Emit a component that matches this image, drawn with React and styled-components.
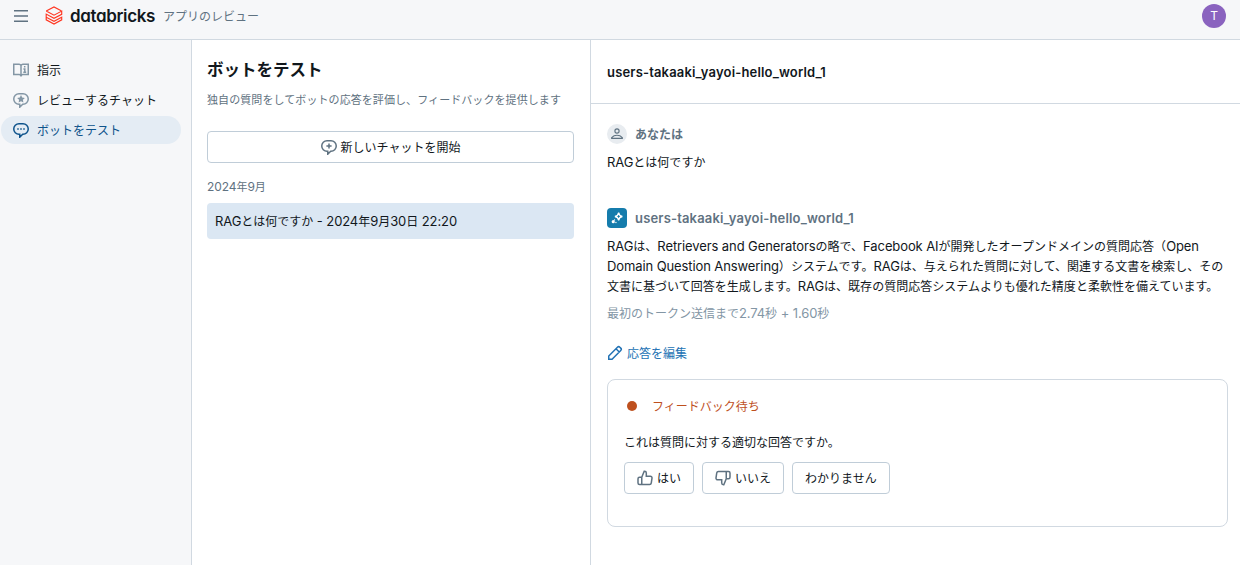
import React from 'react';
import styled, { createGlobalStyle } from 'styled-components';

const GlobalStyle = createGlobalStyle`
  *, *::before, *::after { box-sizing: border-box; }
  body {
    margin: 0;
    background: #fff;
    color: #11171c;
    font-family: "Inter", "Noto Sans CJK JP", sans-serif;
    font-size: 12px;
    line-height: 20px;
  }
  button { font: inherit; color: inherit; }
`;

const Page = styled.div`
  display: flex;
  flex-direction: column;
  height: 565px;
  overflow: hidden;
`;

const TopBar = styled.header`
  display: flex;
  align-items: center;
  height: 40px;
  padding: 0 14px 8px 13px;
  background: #f6f7f9;
  border-bottom: 1px solid #d1d9e1;
  color: #5f7281;
`;

const Brand = styled.span`
  width: 86px;
  margin-left: 7px;
  color: #11171c;
  font-size: 17px;
  font-weight: 600;
  letter-spacing: -0.35px;
  font-feature-settings: "cv11";
`;

const AppName = styled.span`
  flex: 1;
  margin-left: 7px;
  padding-top: 2px;
`;

const Avatar = styled.div`
  display: flex;
  align-items: center;
  justify-content: center;
  width: 24px;
  height: 24px;
  border-radius: 50%;
  background: #8a63bf;
  color: #fff;
`;

const Columns = styled.div`
  display: flex;
  flex: 1;
  min-height: 0;
`;

const Sidebar = styled.nav`
  display: flex;
  flex-direction: column;
  gap: 2px;
  width: 192px;
  padding: 16px 10px 0 1px;
  background: #f6f7f9;
  border-right: 1px solid #d1d9e1;
`;

const NavItem = styled.a`
  display: flex;
  align-items: center;
  gap: 8px;
  height: 28px;
  padding: 0 12px;
  border-radius: 14px;
  background: ${(p) => (p.$active ? '#e4ecf4' : 'transparent')};
  color: ${(p) => (p.$active ? '#0e538b' : '#11171c')};
  svg { color: ${(p) => (p.$active ? '#0e538b' : '#8396a5')}; }
`;

// Glyphs sit high in their line box; this centres them beside icons.
const Label = styled.span`
  padding-top: 2px;
`;

const ChatList = styled.section`
  display: flex;
  flex-direction: column;
  width: 399px;
  padding: 16px 16px 0 15px;
  border-right: 1px solid #d1d9e1;
`;

const Title = styled.h1`
  margin: 0;
  font-size: 16.5px;
  font-weight: 600;
  line-height: 28px;
`;

const Subtitle = styled.p`
  margin: 6px 0 21px;
  font-size: 11px;
  letter-spacing: 0.08px;
  color: #5f7281;
`;

const Button = styled.button`
  display: inline-flex;
  align-items: center;
  justify-content: center;
  gap: 4px;
  height: 32px;
  padding: 0 12px;
  border: 1px solid #c0cdd8;
  border-radius: 4px;
  background: #fff;
  svg { color: #5f7281; }
`;

const MonthLabel = styled.div`
  margin: 14px 0 6px;
  font-size: 11px;
  color: #5f7281;
`;

const ChatEntry = styled.div`
  display: flex;
  align-items: center;
  height: 36px;
  padding: 0 8px;
  border-radius: 4px;
  background: #dbe7f3;
`;

const Conversation = styled.main`
  display: flex;
  flex: 1;
  flex-direction: column;
  min-width: 0;
`;

const ConversationHeader = styled.div`
  display: flex;
  align-items: center;
  height: 64px;
  padding: 1px 16px 0;
  border-bottom: 1px solid #d1d9e1;
  font-weight: 600;
`;

const Messages = styled.div`
  display: flex;
  flex-direction: column;
  align-items: flex-start;
  padding: 20px 12px 0 16px;
`;

const Author = styled.div`
  display: flex;
  align-items: center;
  gap: 8px;
  height: 20px;
  margin-top: ${(p) => p.$top || 0}px;
  color: #5f7281;
  font-weight: 600;
`;

const AuthorBadge = styled.span`
  display: flex;
  align-items: center;
  justify-content: center;
  width: 20px;
  height: 20px;
  border-radius: ${(p) => (p.$bot ? '4px' : '50%')};
  background: ${(p) => (p.$bot ? '#157cac' : '#e8ecf0')};
  color: ${(p) => (p.$bot ? '#fff' : '#5f7281')};
`;

const MessageText = styled.p`
  margin: 9px 0 0;
  letter-spacing: 0.02px;
  white-space: nowrap;
`;

const Timing = styled.div`
  margin-top: 7px;
  color: #8396a5;
`;

const EditLink = styled.a`
  display: flex;
  align-items: center;
  gap: 4px;
  height: 20px;
  margin-top: 19px;
  color: #2272b4;
`;

const FeedbackCard = styled.section`
  align-self: stretch;
  height: 148px;
  margin-top: 16px;
  padding: 16px;
  border: 1px solid #d1d9e1;
  border-radius: 8px;
`;

const Status = styled.div`
  display: flex;
  align-items: center;
  gap: 15px;
  height: 20px;
  padding-left: 3px;
  color: #be501e;
`;

const StatusDot = styled.span`
  width: 10px;
  height: 10px;
  border-radius: 50%;
  background: currentColor;
`;

const Question = styled.p`
  margin: 17px 0 9px;
`;

const Answers = styled.div`
  display: flex;
  gap: 8px;
`;

const LatinRun = styled.span`
  font-size: ${(p) => p.$size}px;
  letter-spacing: ${(p) => p.$spacing}px;
  line-height: 0;
`;

// Latin runs are set one pixel larger than the Japanese text around them.
function Mixed({ children, size = 13, spacing = -0.1 }) {
  return children.split(/([\x20-\x7e]+)/).map((part, i) =>
    i % 2 ? (
      <LatinRun key={i} $size={size} $spacing={spacing}>{part}</LatinRun>
    ) : (
      part
    )
  );
}

function Icon({ size = 16, children }) {
  return (
    <svg width={size} height={size} viewBox="0 0 16 16" fill="none" stroke="currentColor" strokeWidth="1.5">
      {children}
    </svg>
  );
}

const bubble = 'M6 1.75h4a5.25 5.25 0 0 1 0 10.5h-.3L6.75 15.2v-2.95H6a5.25 5.25 0 0 1 0-10.5z';

const MenuIcon = () => (
  <Icon><path d="M1 2.75h14M1 8h14M1 13.25h14" /></Icon>
);

const LogoSvg = styled.svg`
  margin-left: 16px;
`;

const LogoMark = () => (
  <LogoSvg width="18" height="19" viewBox="0 0 18 19" fill="none" stroke="#ff3621" strokeWidth="1.15">
    <path d="M1.2 4.9 9 1l7.2 3.7M1.2 4.9 9 9.2l7.7-4.1v3.2L9 12.3 1.2 8.1v3.1L9 15.3l7.7-4.1v2.6L9 18l-7.8-4.2v-2.6" />
  </LogoSvg>
);

const GuideIcon = () => (
  <Icon>
    <path d="M8 3.3C7.6 2.5 7 2.15 6.1 2.15H.75v10.3H6c1.2 0 2 .7 2 2.05 0-1.35.8-2.05 2-2.05h5.25V2.15H9.9C9 2.15 8.4 2.5 8 3.3zV14" />
    <path d="M11.7 3.9v1.6M10.4 7.1h1.4v3.2M10.3 10.2h2.9" />
  </Icon>
);

const StarBubbleIcon = () => (
  <Icon>
    <path d={bubble} />
    <path d="M8 3.1l1.2 2.5 2.7.3-2 1.9.5 2.7L8 9.2l-2.4 1.3.5-2.7-2-1.9 2.7-.3z" fill="currentColor" stroke="none" />
  </Icon>
);

const DotsBubbleIcon = () => (
  <Icon>
    <path d={bubble} />
    <path d="M4.25 7h1.5M7.25 7h1.5M10.25 7h1.5" />
  </Icon>
);

const PlusBubbleIcon = () => (
  <Icon>
    <path d={bubble} />
    <path d="M8 4.4v5.2M5.4 7h5.2" />
  </Icon>
);

const UserIcon = () => (
  <Icon size={12}>
    <circle cx="8" cy="4" r="2.8" />
    <path d="M.9 13.9v-1.2C2.7 10.8 5.2 9.7 8 9.7s5.3 1.1 7.1 3v1.2z" />
  </Icon>
);

const SparkleIcon = () => (
  <Icon size={12}>
    <path d="M10.2.9c.5 3.6 1.500 4.600 5 5.100-3.500.5-4.500 1.500-5 5.100-.5-3.600-1.500-4.600-5-5.100 3.500-.5 4.500-1.500 5-5.100z" strokeWidth="1.700" />
    <circle cx="3" cy="12.900" r="2.100" fill="currentColor" stroke="none" />
    <circle cx="6.600" cy="14" r=".9" fill="currentColor" stroke="none" />
    <circle cx="4.700" cy="10.500" r=".9" fill="currentColor" stroke="none" />
  </Icon>
);

const PencilIcon = () => (
  <Icon>
    <path d="M1.75 14.25v-3.3l8.7-8.7a1.7 1.7 0 0 1 2.4 0l.9.9a1.7 1.7 0 0 1 0 2.4l-8.7 8.7zM9 3.75 12.25 7" />
  </Icon>
);

const thumb = 'M4.75 7.2 7.2 1.25h.4a1.7 1.7 0 0 1 1.7 1.7v3.3h4a1.7 1.7 0 0 1 1.7 1.95l-.75 4.85a1.7 1.7 0 0 1-1.7 1.45h-7.8zM4.75 7.2H2.5A1.5 1.5 0 0 0 1 8.7v4.3a1.5 1.5 0 0 0 1.5 1.5h2.25z';

const ThumbUpIcon = () => (
  <Icon><path d={thumb} /></Icon>
);

const ThumbDownIcon = () => (
  <Icon><path d={thumb} transform="rotate(180 8 8)" /></Icon>
);

const MODEL_NAME = 'users-takaaki_yayoi-hello_world_1';

export default function App() {
  return (
    <>
      <GlobalStyle />
      <Page>
        <TopBar>
          <MenuIcon />
          <LogoMark />
          <Brand>databricks</Brand>
          <AppName>アプリのレビュー</AppName>
          <Avatar>T</Avatar>
        </TopBar>
        <Columns>
          <Sidebar>
            <NavItem><GuideIcon /><Label>指示</Label></NavItem>
            <NavItem><StarBubbleIcon /><Label>レビューするチャット</Label></NavItem>
            <NavItem $active><DotsBubbleIcon /><Label>ボットをテスト</Label></NavItem>
          </Sidebar>
          <ChatList>
            <Title>ボットをテスト</Title>
            <Subtitle>独自の質問をしてボットの応答を評価し、フィードバックを提供します</Subtitle>
            <Button><PlusBubbleIcon /><Label>新しいチャットを開始</Label></Button>
            <MonthLabel><Mixed size={12}>2024年9月</Mixed></MonthLabel>
            <ChatEntry><Label><Mixed>RAGとは何ですか - 2024年9月30日 22:20</Mixed></Label></ChatEntry>
          </ChatList>
          <Conversation>
            <ConversationHeader><Label><Mixed spacing={0.17}>{MODEL_NAME}</Mixed></Label></ConversationHeader>
            <Messages>
              <Author><AuthorBadge><UserIcon /></AuthorBadge><Label>あなたは</Label></Author>
              <MessageText><Mixed>RAGとは何ですか</Mixed></MessageText>
              <Author $top={35}>
                <AuthorBadge $bot><SparkleIcon /></AuthorBadge>
                <Label><Mixed spacing={0.17}>{MODEL_NAME}</Mixed></Label>
              </Author>
              <MessageText>
                <Mixed>RAGは、Retrievers and Generatorsの略で、Facebook AIが開発したオープンドメインの質問応答（Open</Mixed>
                <br />
                <Mixed>Domain Question Answering）システムです。RAGは、与えられた質問に対して、関連する文書を検索し、その</Mixed>
                <br />
                <Mixed>文書に基づいて回答を生成します。RAGは、既存の質問応答システムよりも優れた精度と柔軟性を備えています。</Mixed>
              </MessageText>
              <Timing><Mixed>最初のトークン送信まで2.74秒 + 1.60秒</Mixed></Timing>
              <EditLink><PencilIcon /><Label>応答を編集</Label></EditLink>
              <FeedbackCard>
                <Status><StatusDot /><Label>フィードバック待ち</Label></Status>
                <Question>これは質問に対する適切な回答ですか。</Question>
                <Answers>
                  <Button><ThumbUpIcon /><Label>はい</Label></Button>
                  <Button><ThumbDownIcon /><Label>いいえ</Label></Button>
                  <Button><Label>わかりません</Label></Button>
                </Answers>
              </FeedbackCard>
            </Messages>
          </Conversation>
        </Columns>
      </Page>
    </>
  );
}
